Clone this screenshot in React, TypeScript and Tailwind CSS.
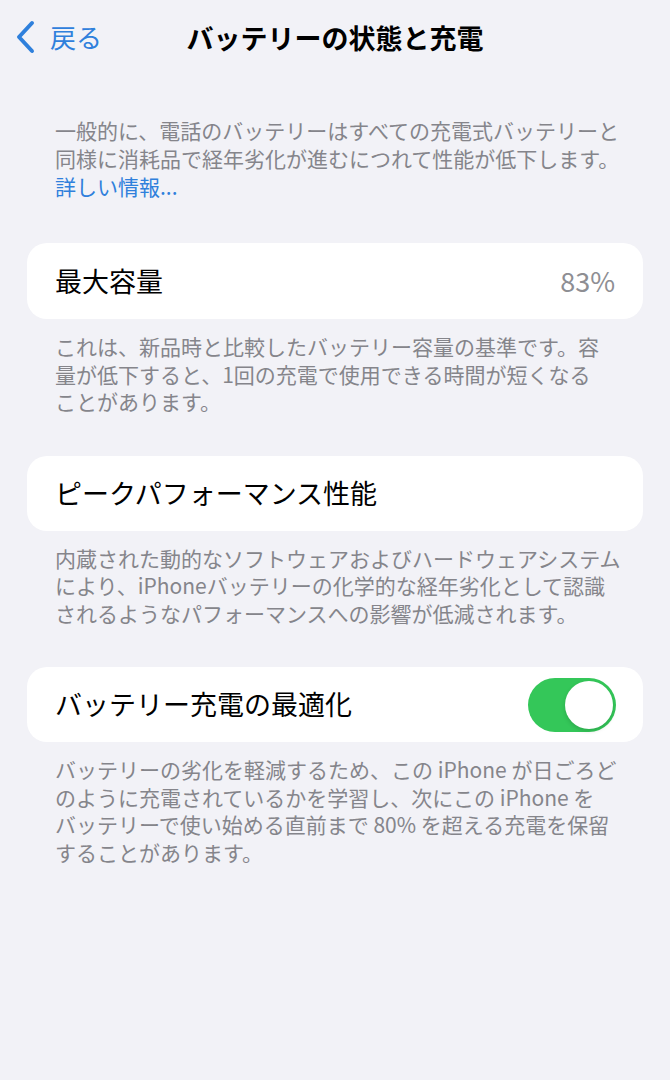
const font = { fontFamily: '"Noto Sans CJK JP", "Noto Sans", sans-serif' };

function Footer({ lines }: { lines: string[] }) {
  return (
    <div className="px-[55px] pt-[14px] text-[21px] leading-[27.5px] text-[#85858b]">
      {lines.map((line) => (
        <div key={line} className="whitespace-nowrap">
          {line}
        </div>
      ))}
    </div>
  );
}

function Toggle({ on }: { on: boolean }) {
  return (
    <div
      className={`flex h-[54px] w-[88px] items-center rounded-full p-[3px] ${
        on ? "justify-end bg-[#34c759]" : "justify-start bg-[#e9e9eb]"
      }`}
    >
      <div className="h-[48px] w-[48px] rounded-full bg-white shadow-[0_2px_4px_rgba(0,0,0,0.15)]" />
    </div>
  );
}

export default function App() {
  return (
    <div className="min-h-screen bg-[#f2f2f7] pb-10" style={font}>
      <header className="grid h-[74px] grid-cols-[1fr_auto_1fr] items-center">
        <button type="button" className="flex items-center gap-[14px] pl-[14px] text-[#2f80dc]">
          <svg width="22" height="34" viewBox="0 0 22 34" fill="none">
            <path d="M18 3 L5 17 L18 31" stroke="currentColor" strokeWidth="4" strokeLinecap="round" strokeLinejoin="round" />
          </svg>
          <span className="text-[26px] leading-none">戻る</span>
        </button>
        <h1 className="text-[27px] font-bold leading-none text-black">バッテリーの状態と充電</h1>
        <div />
      </header>

      <div className="px-[55px] pt-[42px] text-[21px] leading-[28px] text-[#85858b]">
        <div className="whitespace-nowrap">一般的に、電話のバッテリーはすべての充電式バッテリーと</div>
        <div className="whitespace-nowrap">同様に消耗品で経年劣化が進むにつれて性能が低下します。</div>
        <a className="block text-[#2f80dc]">詳しい情報...</a>
      </div>

      <div className="mx-[27px] mt-[43px] flex h-[76px] items-center justify-between rounded-[20px] bg-white px-[28px]">
        <span className="text-[27px] text-black">最大容量</span>
        <span className="text-[27px] text-[#8e8e93]">83%</span>
      </div>
      <Footer
        lines={[
          "これは、新品時と比較したバッテリー容量の基準です。容",
          "量が低下すると、1回の充電で使用できる時間が短くなる",
          "ことがあります。",
        ]}
      />

      <div className="mx-[27px] mt-[40px] flex h-[75px] items-center rounded-[20px] bg-white px-[28px]">
        <span className="text-[27px] text-black">ピークパフォーマンス性能</span>
      </div>
      <Footer
        lines={[
          "内蔵された動的なソフトウェアおよびハードウェアシステム",
          "により、iPhoneバッテリーの化学的な経年劣化として認識",
          "されるようなパフォーマンスへの影響が低減されます。",
        ]}
      />

      <div className="mx-[27px] mt-[40px] flex h-[75px] items-center justify-between rounded-[20px] bg-white pl-[28px] pr-[27px]">
        <span className="text-[27px] text-black">バッテリー充電の最適化</span>
        <Toggle on />
      </div>
      <Footer
        lines={[
          "バッテリーの劣化を軽減するため、この iPhone が日ごろど",
          "のように充電されているかを学習し、次にこの iPhone を",
          "バッテリーで使い始める直前まで 80% を超える充電を保留",
          "することがあります。",
        ]}
      />
    </div>
  );
}
